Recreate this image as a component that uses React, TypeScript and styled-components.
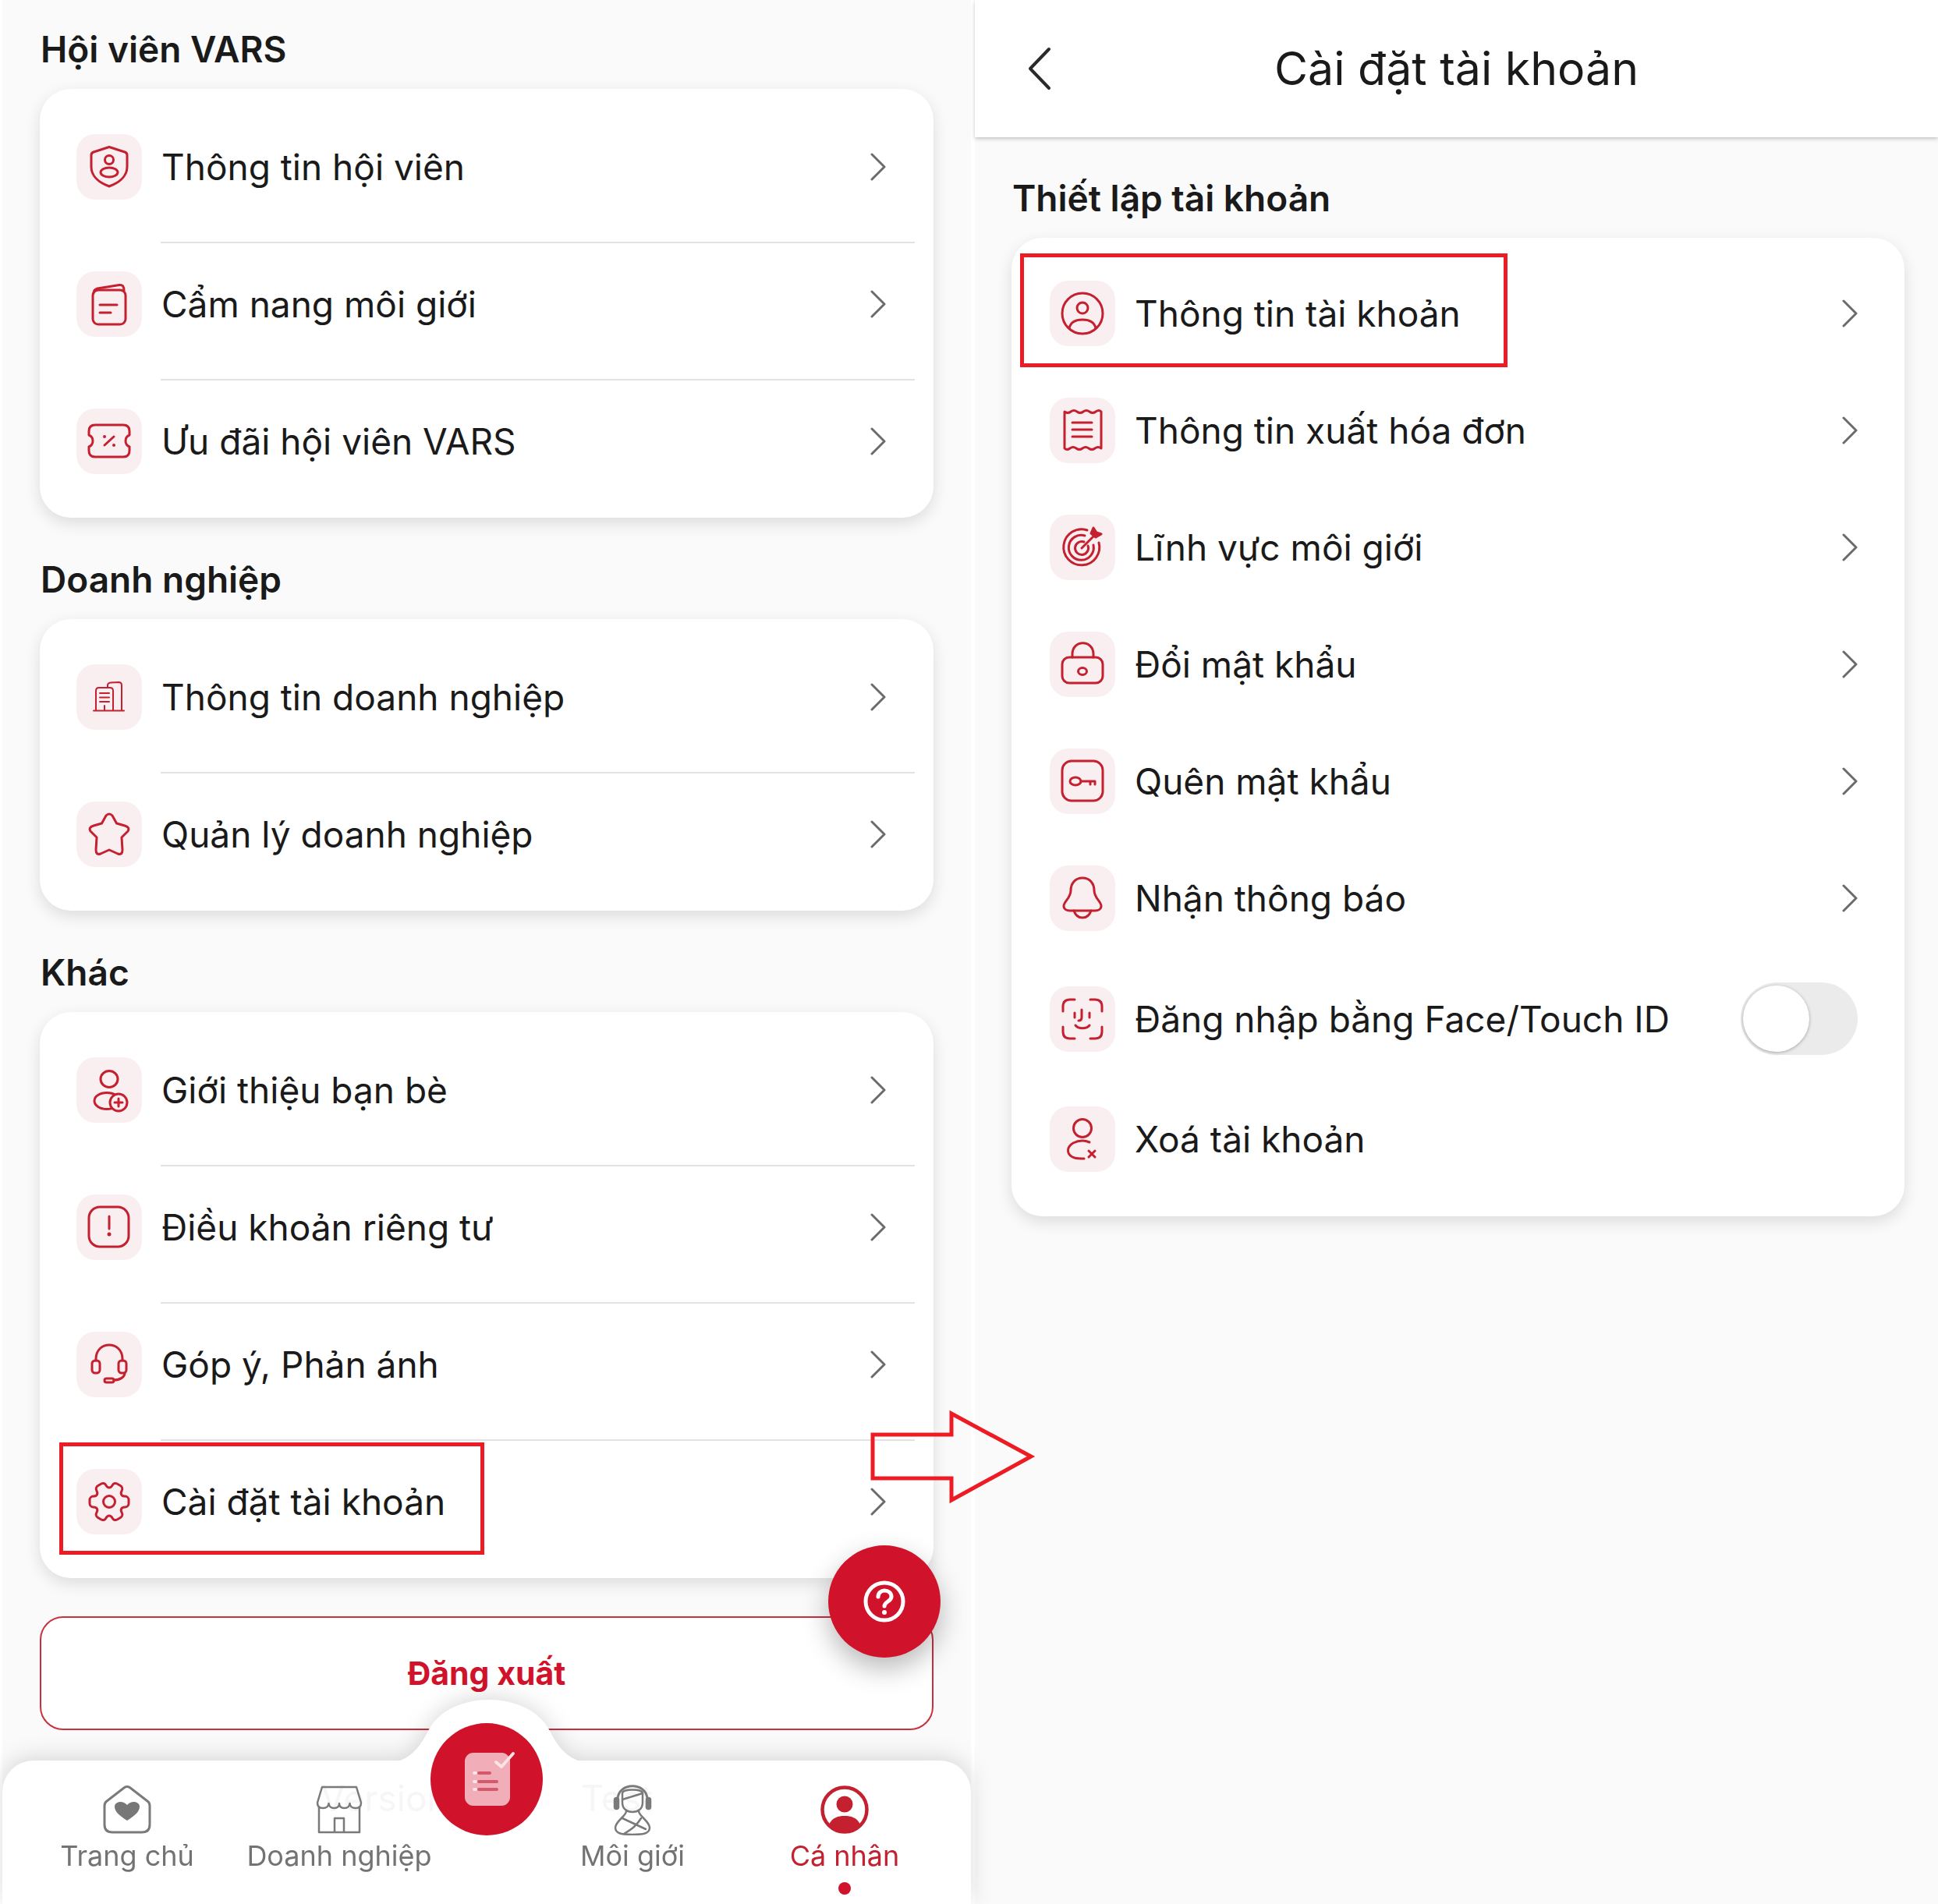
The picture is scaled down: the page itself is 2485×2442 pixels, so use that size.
import * as React from 'react'
import styled, { createGlobalStyle } from 'styled-components'

const RED = '#c4202f'
const FAB_RED = '#d0132b'
const MARK_RED = '#ed1c24'

const GlobalStyle = createGlobalStyle`
  html, body { margin: 0; padding: 0; background: #fff; }
  body { font-family: Inter, "Noto Sans", sans-serif; color: #1a1a1a; }
  * { box-sizing: border-box; }
`

const Page = styled.div`
  position: relative;
  display: flex;
  width: 2485px;
  height: 2442px;
  overflow: hidden;
  padding-left: 3px;
  gap: 5px;
  background: #fff;
`

const LeftPanel = styled.section`
  position: relative;
  width: 1242px;
  height: 100%;
  padding: 38px 48px 0;
  background: #fafafa;
`

const RightPanel = styled.section`
  flex: 1;
  height: 100%;
  background: #fafafa;
`

const Header = styled.header`
  display: grid;
  grid-template-columns: 1fr auto 1fr;
  align-items: center;
  height: 176px;
  background: #fff;
  box-shadow: 0 2px 5px rgba(0, 0, 0, 0.22);
`

const BackButton = styled.div`
  display: flex;
  margin-left: 68px;
`

const HeaderTitle = styled.h1`
  margin: 0;
  font-size: 59px;
  line-height: 70px;
  font-weight: 400;
  color: #1a1a1a;
`

const RightBody = styled.div`
  padding: 53px 43px 0 47px;
`

const SectionTitle = styled.h2`
  margin: 0 0 26px 1px;
  font-size: 46px;
  line-height: 50px;
  font-weight: 600;
  color: #1a1a1a;
`

const Group = styled.div`
  margin-bottom: 54px;
`

const Card = styled.div<{ $tight?: boolean }>`
  padding: 22px 0 ${(p) => (p.$tight ? 24 : 0)}px;
  background: #fff;
  border-radius: 40px;
  box-shadow: 0 7px 20px rgba(0, 0, 0, 0.12);
`

const Row = styled.div`
  padding-top: 36px;
`

const RowMain = styled.div`
  display: flex;
  align-items: center;
  padding: 0 61px 0 47px;
  margin-bottom: 54px;
`

const Divider = styled.div`
  height: 2px;
  margin: 0 24px 0 155px;
  background: #e2e2e2;
`

const LastGap = styled.div`
  height: 2px;
`

const SettingsRow = styled.div`
  display: flex;
  align-items: center;
  padding: 33px 60px 33px 49px;
`

const IconBox = styled.div`
  flex: none;
  width: 84px;
  height: 84px;
  border-radius: 24px;
  background: #f9eff1;
`

const Label = styled.span`
  flex: 1;
  margin-left: 25px;
  font-size: 46px;
  line-height: 56px;
  font-weight: 400;
  color: #1a1a1a;
  white-space: nowrap;
`

const Toggle = styled.div`
  display: flex;
  align-items: center;
  width: 150px;
  height: 93px;
  padding-left: 3px;
  border-radius: 47px;
  background: #ebebeb;
`

const Knob = styled.div`
  width: 85px;
  height: 85px;
  border-radius: 50%;
  background: #fff;
  box-shadow: 0 1px 4px rgba(0, 0, 0, 0.3);
`

const LogoutButton = styled.div`
  display: flex;
  align-items: center;
  justify-content: center;
  height: 146px;
  margin-top: -5px;
  border: 2px solid #c8303f;
  border-radius: 30px;
  background: #fff;
  font-size: 41px;
  font-weight: 700;
  color: ${FAB_RED};
`

const HelpButton = styled.div`
  position: absolute;
  left: 1062px;
  top: 1982px;
  display: flex;
  align-items: center;
  justify-content: center;
  width: 144px;
  height: 144px;
  border-radius: 50%;
  background: ${FAB_RED};
  box-shadow: 0 14px 34px rgba(0, 0, 0, 0.28);
  z-index: 3;
`

const TabDock = styled.div`
  position: absolute;
  left: 0;
  right: 0;
  bottom: 0;
  height: 184px;
  filter: drop-shadow(0 -4px 14px rgba(0, 0, 0, 0.14));
`

const Hump = styled.svg`
  position: absolute;
  left: 486px;
  top: -78px;
`

const TabBar = styled.nav`
  position: relative;
  display: grid;
  grid-template-columns: 272px 272px 104px 272px 272px;
  height: 100%;
  padding: 33px 24px 0;
  background: #fff;
  border-radius: 40px 40px 0 0;
`

const GhostVersion = styled.div`
  position: absolute;
  left: 0;
  right: 0;
  top: 20px;
  display: flex;
  justify-content: center;
  gap: 170px;
  font-size: 46px;
  line-height: 56px;
  color: #f6f6f6;
`

const Tab = styled.div<{ $active?: boolean }>`
  position: relative;
  display: flex;
  flex-direction: column;
  align-items: center;
  color: ${(p) => (p.$active ? RED : '#737373')};
`

const TabIcon = styled.div`
  display: flex;
  align-items: center;
  justify-content: center;
  height: 60px;
`

const TabLabel = styled.span`
  margin-top: 7px;
  font-size: 36px;
  line-height: 44px;
  white-space: nowrap;
`

const ActiveDot = styled.span`
  width: 16px;
  height: 16px;
  margin-top: 12px;
  border-radius: 50%;
  background: ${FAB_RED};
`

const CenterAction = styled.div`
  position: absolute;
  left: 549px;
  top: -48px;
  display: flex;
  align-items: center;
  justify-content: center;
  width: 144px;
  height: 144px;
  border-radius: 50%;
  background: ${FAB_RED};
`

const Highlight = styled.div<{ $x: number; $y: number; $w: number; $h: number }>`
  position: absolute;
  left: ${(p) => p.$x}px;
  top: ${(p) => p.$y}px;
  width: ${(p) => p.$w}px;
  height: ${(p) => p.$h}px;
  border: 5px solid ${MARK_RED};
  z-index: 4;
`

const FlowArrow = styled.svg`
  position: absolute;
  left: 1110px;
  top: 1805px;
  z-index: 4;
`

const Svg = ({ children, sw = 3 }: { children: React.ReactNode; sw?: number }) => (
  <svg width="84" height="84" viewBox="0 0 84 84" fill="none" stroke={RED} strokeWidth={sw} strokeLinecap="round" strokeLinejoin="round">
    {children}
  </svg>
)

const icons: Record<string, React.ReactNode> = {
  shield: (
    <Svg>
      <path d="M42 16.5 L62 23 Q65 24 65 27 V42 C65 55 53 63 42 67 C31 63 19 55 19 42 V27 Q19 24 22 23 Z" />
      <circle cx="42" cy="33" r="5.5" />
      <ellipse cx="42" cy="49" rx="11" ry="6" />
    </Svg>
  ),
  book: (
    <Svg>
      <rect x="21" y="24" width="42" height="44" rx="7" />
      <path d="M22 28 C22 24 24 23 27 22 L55 17.5 C59 17 61 19 61 25" />
      <path d="M30 43 H52 M30 53 H44" />
    </Svg>
  ),
  ticket: (
    <Svg>
      <path d="M24 21 H60 Q68 21 68 29 V34 Q63 36 63 41.5 Q63 47 68 49 V54 Q68 62 60 62 H24 Q16 62 16 54 V49 Q21 47 21 41.5 Q21 36 16 34 V29 Q16 21 24 21 Z" />
      <path d="M36 47 L48 36" />
      <path d="M36 36 h.01 M48 47 h.01" strokeWidth="4" />
    </Svg>
  ),
  building: (
    <Svg sw={2}>
      <path d="M22 59.5 H61" />
      <path d="M25 59 V34 Q25 30 29 30 H43 Q47 30 47 34 V59" />
      <path d="M40 30 V27 Q40 24 44 23.5 L54 23 Q58 23 58 27 V59" />
      <path d="M30 37 H42 M30 42.5 H42 M30 48 H42 M36 53 V59" />
    </Svg>
  ),
  star: (
    <Svg>
      <path d="M38 18 Q42 14 46 18 L51.5 28 L62 31 Q69 33 66 38 L58 46 L59 62 Q59 69 53 67 L42 62 L31 67 Q25 69 25 62 L26 46 L18 38 Q15 33 22 31 L32.5 28 Z" />
    </Svg>
  ),
  invite: (
    <Svg>
      <ellipse cx="42" cy="28" rx="11" ry="10.5" />
      <ellipse cx="39" cy="56" rx="16" ry="10.5" />
      <circle cx="54" cy="58" r="11" fill="#f9eff1" />
      <path d="M54 53 V63 M49 58 H59" />
    </Svg>
  ),
  alert: (
    <Svg>
      <rect x="16" y="16" width="51" height="51" rx="14" />
      <path d="M42 28 V44" />
      <path d="M42 51 h.01" strokeWidth="5" />
    </Svg>
  ),
  headset: (
    <Svg>
      <path d="M25 37 V35 C25 11 59 11 59 35 V37" />
      <rect x="20" y="37" width="10" height="16" rx="4" />
      <rect x="54" y="37" width="10" height="16" rx="4" />
      <path d="M62 53 C62 58 56 62 48 62" />
      <rect x="36" y="60" width="12" height="5" rx="2.5" />
    </Svg>
  ),
  gear: (
    <Svg>
      <g transform="translate(12 12) scale(2.5)" strokeWidth="1.2">
        <path d="M12 15a3 3 0 1 0 0-6 3 3 0 0 0 0 6Z" />
        <path d="M2 12.88v-1.76c0-1.04.85-1.9 1.9-1.9 1.81 0 2.55-1.28 1.64-2.85-.52-.9-.21-2.07.7-2.59l1.73-.99c.79-.47 1.81-.19 2.28.64l.11.19c.9 1.57 2.38 1.57 3.29 0l.11-.19c.47-.83 1.49-1.11 2.28-.64l1.73.99c.91.52 1.22 1.69.7 2.59-.91 1.57-.17 2.85 1.64 2.85 1.04 0 1.9.85 1.9 1.9v1.76c0 1.04-.85 1.9-1.9 1.9-1.81 0-2.55 1.28-1.64 2.85.52.91.21 2.07-.7 2.59l-1.73.99c-.79.47-1.81.19-2.28-.64l-.11-.19c-.9-1.57-2.38-1.57-3.29 0l-.11.19c-.47.83-1.49 1.11-2.28.64l-1.73-.99a1.9 1.9 0 0 1-.7-2.59c.91-1.57.17-2.85-1.64-2.85-1.05 0-1.9-.86-1.9-1.9Z" />
      </g>
    </Svg>
  ),
  user: (
    <Svg>
      <circle cx="42" cy="42" r="26" />
      <circle cx="42" cy="35" r="7" />
      <path d="M25 61 C27 52 34 50 42 50 C50 50 57 52 59 61" />
    </Svg>
  ),
  receipt: (
    <Svg>
      <path d="M19 18 Q23 21 27 18 T35 18 T43 18 T51 18 T59 18 T66 18 V65 Q62 62 58 65 T50 65 T42 65 T34 65 T26 65 T19 65 Z" />
      <path d="M29 32 H54 M29 41 H54 M29 50 H54" />
    </Svg>
  ),
  target: (
    <Svg>
      <path d="M63 36 A23 23 0 1 1 48 20" />
      <path d="M56 39 A16 16 0 1 1 45 27" />
      <path d="M49 40 A8.5 8.5 0 1 1 44 35" />
      <path d="M41 43 L58 26" />
      <path d="M53 24 L56 17 L60 23 L66 25 L59 29 Z" fill={RED} />
    </Svg>
  ),
  lock: (
    <Svg>
      <rect x="16" y="33" width="52" height="33" rx="9" />
      <path d="M29 33 V29 C29 10 56 10 56 29 V33" />
      <ellipse cx="42" cy="51" rx="5.5" ry="4.5" />
    </Svg>
  ),
  key: (
    <Svg>
      <rect x="16" y="16" width="52" height="51" rx="12" />
      <ellipse cx="33" cy="42" rx="7" ry="5" />
      <path d="M40 42 H58 V46 M52 42 V46" />
    </Svg>
  ),
  bell: (
    <Svg>
      <path d="M42 16 C32 16 27 24 27 32 C27 42 18 46 18 52 C18 56 22 58 26 58 H58 C62 58 66 56 66 52 C66 46 57 42 57 32 C57 24 52 16 42 16 Z" />
      <path d="M31 58 C33 64 37 67 42 67 C47 67 51 64 53 58" />
    </Svg>
  ),
  face: (
    <Svg>
      <path d="M17 32 V26 Q17 17 26 17 H32 M52 17 H58 Q67 17 67 26 V32 M67 52 V58 Q67 67 58 67 H52 M32 67 H26 Q17 67 17 58 V52" />
      <path d="M32 34 V40 M51 34 V40 M41 30 V40 Q41 44 37 44" />
      <path d="M33 50 C37 55 47 55 51 50" />
    </Svg>
  ),
  removeUser: (
    <Svg>
      <circle cx="42" cy="28" r="11.5" />
      <path d="M51 46 C44 43 36 44 30 47 C20 53 22 63 32 66 C36 67 40 67 44 67" />
      <path d="M50 57 L58 65 M58 57 L50 65" />
    </Svg>
  ),
}

const Chevron = () => (
  <svg width="20" height="36" viewBox="0 0 20 36" fill="none" stroke="#6b6b6b" strokeWidth="3" strokeLinecap="round" strokeLinejoin="round">
    <path d="M2 2 L18 18 L2 34" />
  </svg>
)

const HomeIcon = () => (
  <svg width="62" height="62" viewBox="0 0 62 62" fill="none" stroke="#7a7a7a" strokeWidth="3" strokeLinejoin="round">
    <path d="M27 3 Q31 0 35 3 L57 20 Q60 22 60 26 V50 Q60 60 50 60 H12 Q2 60 2 50 V26 Q2 22 5 20 Z" />
    <path d="M31 45 C20 38 15 33 15 27 C15 21 25 18 31 25 C37 18 47 21 47 27 C47 33 42 38 31 45 Z" fill="#777" stroke="none" />
  </svg>
)

const StoreIcon = () => (
  <svg width="60" height="62" viewBox="0 0 60 62" fill="none" stroke="#7a7a7a" strokeWidth="2.5" strokeLinejoin="round">
    <path d="M8 2 H52 L58 22 Q58 29 51 29 Q44 29 43.5 23 Q43 29 36.500 29 Q30 29 30 23 Q30 29 23.500 29 Q17 29 16.500 23 Q16 29 9 29 Q2 29 2 22 Z" />
    <path d="M4 28 V60 H56 V28" />
    <path d="M24 60 V42 H36 V60" />
  </svg>
)

const AgentIcon = () => (
  <svg width="50" height="66" viewBox="0 0 50 66" fill="none" stroke="#7a7a7a" strokeWidth="2.5" strokeLinecap="round" strokeLinejoin="round">
    <path d="M6 24 V20 C6 -3 44 -3 44 20 V24" strokeWidth="3" />
    <rect x="2" y="18" width="5" height="14" rx="2.5" fill="#7a7a7a" />
    <rect x="43" y="18" width="5" height="14" rx="2.5" fill="#7a7a7a" />
    <path d="M12 12 C12 6 38 6 38 12 V24 C38 32 32 36 25 36 C18 36 12 32 12 24 Z" />
    <path d="M12 20 L38 12" />
    <path d="M17 35 C17 41 3 48 3 56 C3 64 12 65 25 65 C38 65 47 64 47 56 C47 48 33 41 33 35" />
    <path d="M12 44 L42 58 M14 64 C24 58 30 54 36 44" />
  </svg>
)

const ProfileIcon = () => (
  <svg width="62" height="62" viewBox="0 0 62 62">
    <circle cx="31" cy="31" r="28.5" fill="none" stroke={RED} strokeWidth="4.5" />
    <circle cx="31" cy="24" r="10.5" fill={RED} />
    <path d="M11 50 C15 41 23 39 31 39 C39 39 47 41 51 50 C46 56 38 59 31 59 C24 59 16 56 11 50 Z" fill={RED} />
  </svg>
)

const memberRows = [
  { icon: 'shield', label: 'Thông tin hội viên' },
  { icon: 'book', label: 'Cẩm nang môi giới' },
  { icon: 'ticket', label: 'Ưu đãi hội viên VARS' },
]

const businessRows = [
  { icon: 'building', label: 'Thông tin doanh nghiệp' },
  { icon: 'star', label: 'Quản lý doanh nghiệp' },
]

const otherRows = [
  { icon: 'invite', label: 'Giới thiệu bạn bè' },
  { icon: 'alert', label: 'Điều khoản riêng tư' },
  { icon: 'headset', label: 'Góp ý, Phản ánh' },
  { icon: 'gear', label: 'Cài đặt tài khoản' },
]

const accountRows = [
  { icon: 'user', label: 'Thông tin tài khoản' },
  { icon: 'receipt', label: 'Thông tin xuất hóa đơn' },
  { icon: 'target', label: 'Lĩnh vực môi giới' },
  { icon: 'lock', label: 'Đổi mật khẩu' },
  { icon: 'key', label: 'Quên mật khẩu' },
  { icon: 'bell', label: 'Nhận thông báo' },
]

function MenuCard({ rows }: { rows: { icon: string; label: string }[] }) {
  return (
    <Card>
      {rows.map((row, i) => (
        <Row key={row.label}>
          <RowMain>
            <IconBox>{icons[row.icon]}</IconBox>
            <Label>{row.label}</Label>
            <Chevron />
          </RowMain>
          {i < rows.length - 1 ? <Divider /> : <LastGap />}
        </Row>
      ))}
    </Card>
  )
}

function App() {
  return (
    <Page>
      <GlobalStyle />
      <LeftPanel>
        <Group>
          <SectionTitle>Hội viên VARS</SectionTitle>
          <MenuCard rows={memberRows} />
        </Group>
        <Group>
          <SectionTitle>Doanh nghiệp</SectionTitle>
          <MenuCard rows={businessRows} />
        </Group>
        <Group>
          <SectionTitle>Khác</SectionTitle>
          <MenuCard rows={otherRows} />
        </Group>
        <LogoutButton>Đăng xuất</LogoutButton>
        <TabDock>
          <Hump width="276" height="82" viewBox="0 0 276 82">
            <path d="M0 82 C30 82 46 68 60 40 C74 12 108 0 138 0 C168 0 202 12 216 40 C230 68 246 82 276 82 Z" fill="#fff" />
          </Hump>
          <TabBar>
            <GhostVersion>
              <span>Version</span>
              <span>Test</span>
            </GhostVersion>
            <Tab>
              <TabIcon><HomeIcon /></TabIcon>
              <TabLabel>Trang chủ</TabLabel>
            </Tab>
            <Tab>
              <TabIcon><StoreIcon /></TabIcon>
              <TabLabel>Doanh nghiệp</TabLabel>
            </Tab>
            <div />
            <Tab>
              <TabIcon><AgentIcon /></TabIcon>
              <TabLabel>Môi giới</TabLabel>
            </Tab>
            <Tab $active>
              <TabIcon><ProfileIcon /></TabIcon>
              <TabLabel>Cá nhân</TabLabel>
              <ActiveDot />
            </Tab>
            <CenterAction>
              <svg width="84" height="72" viewBox="0 0 84 72">
                <rect x="14" y="2" width="58" height="68" rx="11" fill="#f2aeb8" />
                <path d="M32 28 H46 M32 39 H55 M32 49 H55" stroke="#d4596b" strokeWidth="4" strokeLinecap="round" />
                <path d="M26 28 h2 M26 39 h2 M26 49 h2" stroke="#fbe3e6" strokeWidth="4" strokeLinecap="round" />
                <path d="M54 14 L61 20 L76 3" fill="none" stroke="#fbe3e6" strokeWidth="4" strokeLinecap="round" strokeLinejoin="round" />
              </svg>
            </CenterAction>
          </TabBar>
        </TabDock>
      </LeftPanel>
      <RightPanel>
        <Header>
          <BackButton>
            <svg width="30" height="56" viewBox="0 0 30 56" fill="none" stroke="#2a2a2a" strokeWidth="4" strokeLinecap="round" strokeLinejoin="round">
              <path d="M27 3 L3 28 L27 53" />
            </svg>
          </BackButton>
          <HeaderTitle>Cài đặt tài khoản</HeaderTitle>
          <div />
        </Header>
        <RightBody>
          <SectionTitle>Thiết lập tài khoản</SectionTitle>
          <Card $tight>
            {accountRows.map((row) => (
              <SettingsRow key={row.label}>
                <IconBox>{icons[row.icon]}</IconBox>
                <Label>{row.label}</Label>
                <Chevron />
              </SettingsRow>
            ))}
            <SettingsRow>
              <IconBox>{icons.face}</IconBox>
              <Label>Đăng nhập bằng Face/Touch ID</Label>
              <Toggle><Knob /></Toggle>
            </SettingsRow>
            <SettingsRow>
              <IconBox>{icons.removeUser}</IconBox>
              <Label>Xoá tài khoản</Label>
            </SettingsRow>
          </Card>
        </RightBody>
      </RightPanel>
      <HelpButton>
        <svg width="54" height="54" viewBox="0 0 54 54" fill="none" stroke="#fff" strokeWidth="5" strokeLinecap="round">
          <circle cx="27" cy="27" r="24" />
          <path d="M19 21 C19 16 23 13 27 13 C32 13 36 16 36 21 C36 27 27 27 27 33" />
          <path d="M27 41 h.01" strokeWidth="6" />
        </svg>
      </HelpButton>
      <Highlight $x={76} $y={1850} $w={545} $h={144} />
      <Highlight $x={1308} $y={325} $w={625} $h={146} />
      <FlowArrow width="222" height="130" viewBox="0 0 222 130">
        <path d="M9 35 H110 V8 L212 63 L110 119 V91 H9 Z" fill="none" stroke={MARK_RED} strokeWidth="5" />
      </FlowArrow>
    </Page>
  )
}

export default App
